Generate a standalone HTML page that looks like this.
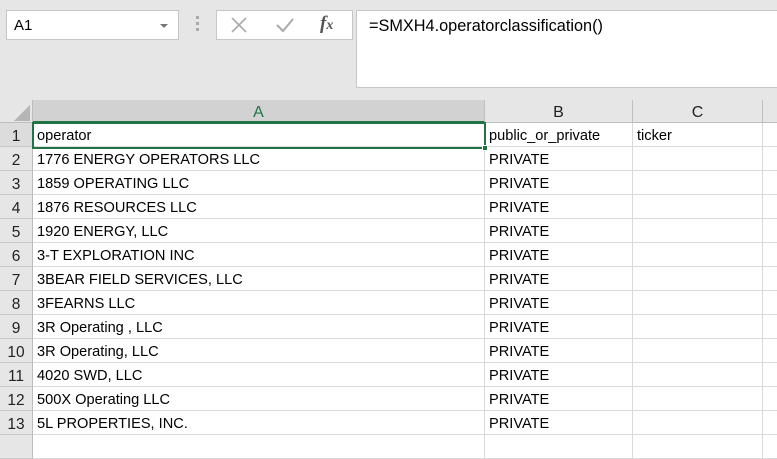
<!DOCTYPE html><html><head><style>
*{margin:0;padding:0;box-sizing:border-box}
body{width:777px;height:440px;overflow:hidden;background:#fff;font-family:"Liberation Sans",Calibri,sans-serif;position:relative}
.top{position:absolute;left:0;top:0;width:777px;height:100px;background:#e6e6e6}
.box{position:absolute;background:#fff;border:1px solid #c6c6c6}
.ch{position:absolute;top:100px;height:23px;background:#e6e6e6;border-right:1px solid #c0c0c0;border-bottom:1px solid #bdbdbd;text-align:center;font-size:16px;line-height:25px;color:#222}
.rh{position:absolute;left:0;width:33px;height:24px;background:#e6e6e6;border-bottom:1px solid #c8c8c8;border-right:1px solid #bdbdbd;text-align:center;font-size:15.5px;line-height:27px;color:#222}
.c{position:absolute;height:24px;border-bottom:1px solid #dadada;border-right:1px solid #dadada;font-size:14.6px;line-height:27px;padding-left:4px;white-space:nowrap;color:#000}
</style></head><body>
<div class="top"></div>
<div class="box" style="left:6px;top:10px;width:173px;height:30px;font-size:15px;line-height:30px;padding-left:7px">A1</div>
<div style="position:absolute;left:160px;top:24px;border-left:4px solid transparent;border-right:4px solid transparent;border-top:4px solid #777"></div>
<div style="position:absolute;left:196px;top:16px;width:3px;height:3px;background:#aaa;box-shadow:0 6px #aaa,0 12px #aaa"></div>
<div class="box" style="left:216px;top:10px;width:137px;height:30px"></div>
<svg style="position:absolute;left:230px;top:17px" width="18" height="16"><path d="M2 1L16 15M16 1L2 15" stroke="#aaa" stroke-width="1.6"/></svg>
<svg style="position:absolute;left:275px;top:17px" width="20" height="16"><path d="M2 8L8 14L18 2" stroke="#aaa" stroke-width="2" fill="none"/></svg>
<div style="position:absolute;left:320px;top:13px;font-family:'Liberation Serif',serif;font-style:italic;font-weight:bold;font-size:19px;color:#555">f<span style="font-size:14px">x</span></div>
<div class="box" style="left:356px;top:10px;width:430px;height:78px;font-size:16.3px;padding:6px 0 0 12px">=SMXH4.operatorclassification()</div>
<div style="position:absolute;left:0;top:100px;width:33px;height:23px;background:#e6e6e6;border-right:1px solid #bdbdbd;border-bottom:1px solid #bdbdbd"></div>
<div style="position:absolute;left:14px;top:105px;border-left:16px solid transparent;border-bottom:16px solid #b5b5b5"></div>
<div class="ch" style="left:33px;width:452px;background:#d2d2d2;color:#217346;border-bottom:2px solid #217346">A</div>
<div class="ch" style="left:485px;width:148px">B</div>
<div class="ch" style="left:633px;width:130px">C</div>
<div class="ch" style="left:763px;width:20px"></div>
<div id="g"></div>
<script>
var d=[["operator","public_or_private","ticker"],["1776 ENERGY OPERATORS LLC","PRIVATE"],["1859 OPERATING LLC","PRIVATE"],["1876 RESOURCES LLC","PRIVATE"],["1920 ENERGY, LLC","PRIVATE"],["3-T EXPLORATION INC","PRIVATE"],["3BEAR FIELD SERVICES, LLC","PRIVATE"],["3FEARNS LLC","PRIVATE"],["3R Operating , LLC","PRIVATE"],["3R Operating, LLC","PRIVATE"],["4020 SWD, LLC","PRIVATE"],["500X Operating LLC","PRIVATE"],["5L PROPERTIES, INC.","PRIVATE"],["",""]];
var h="";for(var i=0;i<d.length;i++){var y=123+i*24;
h+='<div class="rh" style="top:'+y+'px;'+(i==0?'background:#dcdcdc;':'')+'">'+(i<13?i+1:'')+'</div>';
h+='<div class="c" style="left:33px;top:'+y+'px;width:452px">'+d[i][0]+'</div>';
h+='<div class="c" style="left:485px;top:'+y+'px;width:148px">'+(d[i][1]||'')+'</div>';
h+='<div class="c" style="left:633px;top:'+y+'px;width:130px">'+(d[i][2]||'')+'</div>';
h+='<div class="c" style="left:763px;top:'+y+'px;width:20px"></div>';}
document.getElementById("g").innerHTML=h;
</script>
<div style="position:absolute;left:32px;top:122px;width:454px;height:27px;border:2px solid #217346"></div>
<div style="position:absolute;left:482px;top:145px;width:6px;height:6px;background:#217346;border:1px solid #fff"></div>
</body></html>
